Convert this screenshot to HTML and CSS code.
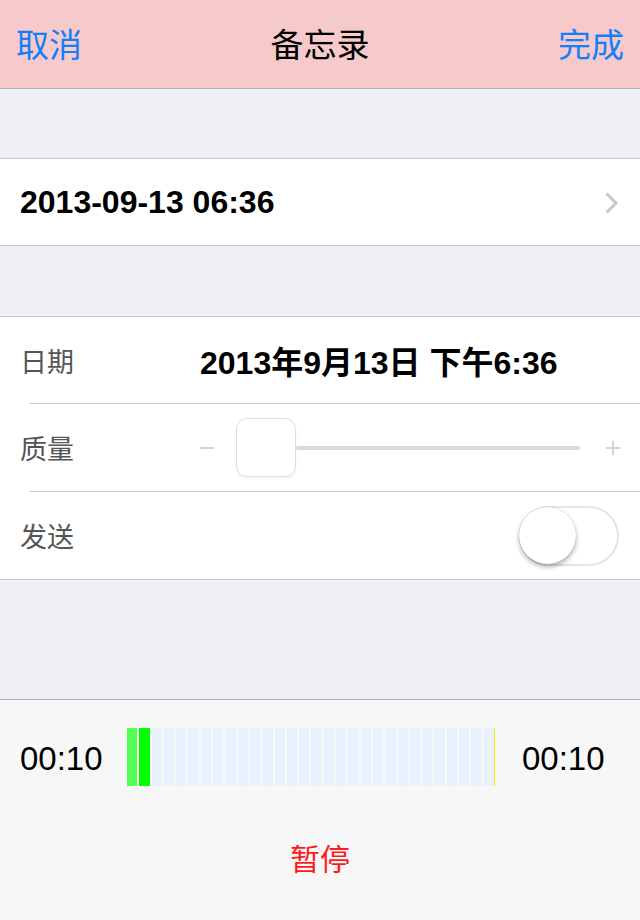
FILE: index.html
```html
<!DOCTYPE html>
<html lang="zh">
<head>
    <meta charset="UTF-8">
    <meta name="viewport" content="width=device-width, initial-scale=1.0">
    <title>备忘录</title>
    <link rel="stylesheet" href="styles.css">
</head>
<body>

    <header class="nav-bar">
        <span class="nav-btn">取消</span>
        <h1 class="nav-title">备忘录</h1>
        <span class="nav-btn">完成</span>
    </header>

    <section class="group group-top">
        <div class="cell">
            <span class="cell-value">2013-09-13 06:36</span>
            <svg class="chevron" width="15" height="24" viewBox="0 0 15 24">
                <path d="M2.5 2.5 L12 12 L2.5 21.5" fill="none" stroke="#c7c7cc" stroke-width="3"/>
            </svg>
        </div>
    </section>

    <section class="group group-form">
        <div class="cell">
            <span class="cell-label">日期</span>
            <span class="cell-date">2013年9月13日 下午6:36</span>
        </div>
        <div class="cell cell-inset">
            <span class="cell-label">质量</span>
            <div class="slider">
                <span class="slider-minus"></span>
                <div class="slider-track">
                    <span class="slider-thumb"></span>
                    <span class="slider-rail"></span>
                </div>
                <span class="slider-plus"></span>
            </div>
        </div>
        <div class="cell cell-inset">
            <span class="cell-label">发送</span>
            <div class="switch">
                <span class="switch-knob"></span>
            </div>
        </div>
    </section>

    <section class="recorder">
        <div class="recorder-row">
            <span class="time">00:10</span>
            <div class="meter" id="meter"></div>
            <span class="time">00:10</span>
        </div>
        <div class="pause-btn">暂停</div>
    </section>

    <script>
        // Barras do medidor: 2 ativas, o resto vazio
        var meter = document.getElementById("meter");
        for (var i = 0; i < 30; i++) {
            var bar = document.createElement("span");
            bar.className = "bar";
            if (i === 0) bar.className += " bar-soft";
            if (i === 1) bar.className += " bar-on";
            meter.appendChild(bar);
        }
    </script>

</body>
</html>
```

FILE: styles.css
```css
/* Estilos gerais */
body {
    margin: 0;
    padding: 0;
    width: 640px;
    height: 920px;
    display: flex;
    flex-direction: column;
    background-color: #efeff4;
    font-family: "Liberation Sans", "Noto Sans CJK SC", sans-serif;
    color: #000;
    overflow: hidden;
}

/* Barra de navegação */
.nav-bar {
    height: 88px;
    flex-shrink: 0;
    display: flex;
    align-items: center;
    justify-content: space-between;
    padding: 0 16px 0 16px;
    background-color: #f6c9ca;
    border-bottom: 1px solid #b2b2b2;
}

.nav-btn {
    font-size: 33px;
    color: #157efb;
    padding-bottom: 2px;
}

.nav-title {
    margin: 0;
    font-size: 33px;
    font-weight: normal;
    padding-bottom: 2px;
}

/* Grupos de células */
.group {
    background-color: white;
    border-top: 1px solid #c8c7cc;
    border-bottom: 1px solid #c8c7cc;
}

.group-top {
    margin-top: 69px;
}

.group-form {
    margin-top: 70px;
}

.cell {
    height: 86px;
    display: flex;
    align-items: center;
    padding: 0 21px 0 20px;
}

.cell-inset {
    height: 87px;
    border-top: 1px solid #c8c7cc;
    margin-left: 30px;
    padding-left: 0;
}

.cell-inset .cell-label {
    margin-left: -10px;
}

.cell-value {
    flex: 1;
    font-size: 32px;
    font-weight: bold;
}

.chevron {
    display: block;
    margin-top: 2px;
}

.cell-label {
    width: 180px;
    flex-shrink: 0;
    font-size: 27px;
    color: #555;
}

.cell-date {
    font-size: 32px;
    font-weight: bold;
}

/* Slider */
.slider {
    flex: 1;
    display: flex;
    align-items: center;
}

.slider-minus {
    width: 14px;
    height: 2px;
    background-color: #d4d4d4;
    margin-right: 22px;
}

.slider-track {
    flex: 1;
    display: flex;
    align-items: center;
}

.slider-thumb {
    width: 58px;
    height: 57px;
    border: 1px solid #dedede;
    border-radius: 11px;
    background-color: white;
    box-shadow: 0 2px 3px rgba(0, 0, 0, 0.05);
}

.slider-rail {
    flex: 1;
    height: 4px;
    border-radius: 2px;
    background-color: #d9d9d9;
}

.slider-plus {
    width: 14px;
    height: 14px;
    margin-left: 26px;
    margin-right: -1px;
    background:
        linear-gradient(#d4d4d4, #d4d4d4) center / 14px 2px no-repeat,
        linear-gradient(#d4d4d4, #d4d4d4) center / 2px 14px no-repeat;
}

/* Interruptor */
.switch {
    margin-left: auto;
    width: 96px;
    height: 56px;
    border: 2px solid #e5e5e5;
    border-radius: 30px;
    display: flex;
    align-items: center;
}

.switch-knob {
    width: 57px;
    height: 57px;
    margin-left: -2px;
    border-radius: 50%;
    background-color: white;
    box-shadow: 0 3px 5px rgba(0, 0, 0, 0.3), 0 0 1px rgba(0, 0, 0, 0.3);
}

/* Gravador */
.recorder {
    flex: 1;
    margin-top: 119px;
    background-color: #f7f7f7;
    border-top: 1px solid #b2b2b2;
    padding-top: 28px;
}

.recorder-row {
    height: 58px;
    display: flex;
    align-items: center;
    padding-left: 20px;
}

.time {
    width: 84px;
    font-size: 33px;
    padding-top: 4px;
}

.meter {
    width: 367px;
    height: 58px;
    margin: 0 27px 0 23px;
    display: flex;
    gap: 2px;
    border-right: 1px solid #f0f000;
}

.bar {
    flex: 1;
    background-color: #eaf1fe;
}

.bar-soft {
    background-color: #55ff55;
}

.bar-on {
    background-color: #00ff00;
}

.pause-btn {
    margin-top: 50px;
    height: 48px;
    line-height: 48px;
    text-align: center;
    font-size: 30px;
    color: #fe1a1a;
}
```
